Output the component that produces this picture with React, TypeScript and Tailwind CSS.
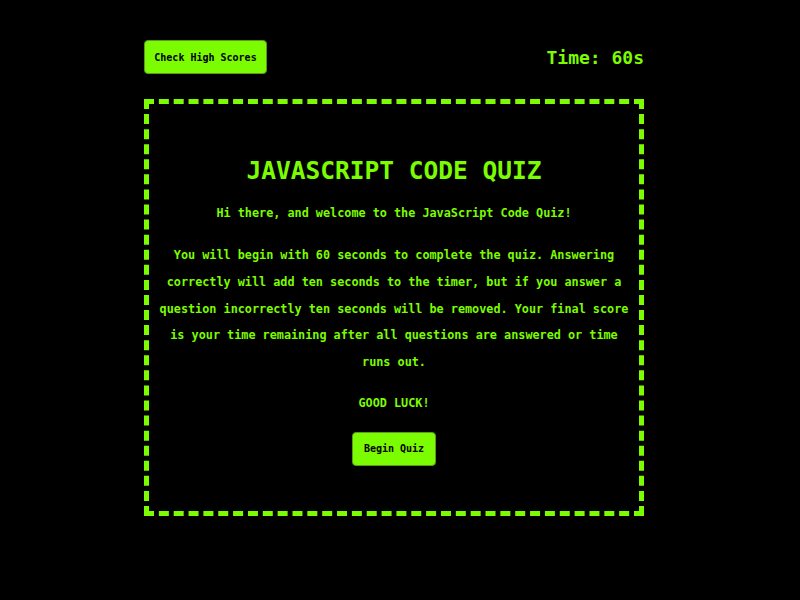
export default function App() {
  return (
    <div className="min-h-screen bg-black text-[#7cfc00] font-['DejaVu_Sans_Mono',monospace] font-bold">
      <div className="w-[500px] ml-[144px] pt-[40px]">
        {/* Header */}
        <div className="flex items-center justify-between h-[34px]">
          <button className="h-[34px] w-[123px] bg-[#7cfc00] text-black text-[10px] rounded-[4px] border border-[#5a9a20]">
            Check High Scores
          </button>
          <span className="text-[18px]">Time: 60s</span>
        </div>

        {/* Quiz box */}
        <div className="mt-[25px] h-[417px] border-[5px] border-dashed border-[#7cfc00] px-[7px] flex flex-col items-center text-center">
          <h1 className="mt-[50px] text-[24.5px] leading-[34px]">JAVASCRIPT CODE QUIZ</h1>
          <p className="mt-[15px] text-[11.8px] leading-[20px]">Hi there, and welcome to the JavaScript Code Quiz!</p>
          <p className="mt-[19px] text-[11.8px] leading-[26.8px]">
            You will begin with 60 seconds to complete the quiz. Answering correctly will add ten seconds to the timer, but if you answer a question incorrectly ten seconds will be removed. Your final score is your time remaining after all questions are answered or time runs out.
          </p>
          <p className="mt-[17px] text-[11.8px] leading-[20px]">GOOD LUCK!</p>
          <button className="mt-[19px] h-[34px] w-[84px] bg-[#7cfc00] text-black text-[10px] rounded-[4px] border border-[#5a9a20]">
            Begin Quiz
          </button>
        </div>
      </div>
    </div>
  )
}
